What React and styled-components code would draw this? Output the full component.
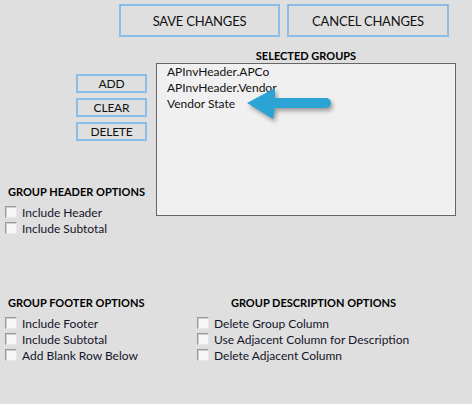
import React from 'react';
import styled, { createGlobalStyle } from 'styled-components';

const GlobalStyle = createGlobalStyle`
  html, body {
    margin: 0;
    padding: 0;
    background: #dfdfdf;
  }
  body {
    font-family: Lato, "Open Sans", "Liberation Sans", sans-serif;
    color: #111;
  }
`;

const Sheet = styled.div`
  width: 472px;
  height: 404px;
  background: #dfdfdf;
  overflow: hidden;
`;

const TopBar = styled.div`
  display: flex;
  gap: 7px;
  padding: 4px 0 0 119px;
`;

const FormButton = styled.button`
  box-sizing: border-box;
  width: ${(p) => p.$w}px;
  height: ${(p) => p.$h}px;
  margin: 0;
  padding: 0;
  background: #dfdfdf;
  border: 2px solid #8bbde9;
  border-radius: 0;
  font-family: inherit;
  font-size: ${(p) => p.$size}px;
  color: #111;
  letter-spacing: -0.2px;
  cursor: pointer;
`;

const Middle = styled.div`
  display: flex;
  margin-top: 11px;
`;

const LeftColumn = styled.div`
  width: 156px;
  display: flex;
  flex-direction: column;
`;

const ButtonStack = styled.div`
  display: flex;
  flex-direction: column;
  gap: 5px;
  margin: 26px 0 0 76px;
`;

const GroupBlock = styled.div`
  width: 300px;
  display: flex;
  flex-direction: column;
`;

const Title = styled.div`
  font-weight: 700;
  font-size: 11px;
  line-height: 15px;
  color: #000;
  text-align: ${(p) => p.$align || 'left'};
  padding-left: ${(p) => p.$indent || 0}px;
  white-space: nowrap;
`;

const ListBox = styled.div`
  position: relative;
  box-sizing: border-box;
  height: 153px;
  background: #f0f0f0;
  border: 1px solid #666;
  padding: 0 0 0 10px;
`;

const ListItem = styled.div`
  font-size: 12px;
  line-height: 16px;
  color: #111;
`;

const Pointer = styled.svg`
  position: absolute;
  left: 88px;
  top: 21px;
  overflow: visible;
  filter: drop-shadow(2px 3px 2px rgba(0, 0, 0, 0.35));
`;

const Section = styled.div`
  box-sizing: border-box;
  display: flex;
  flex-direction: column;
  margin-top: ${(p) => p.$top || 0}px;
  padding-left: ${(p) => p.$pad ?? 5}px;
  width: ${(p) => (p.$w ? `${p.$w}px` : 'auto')};
`;

const OptionList = styled.div`
  display: flex;
  flex-direction: column;
  margin-top: 5px;
`;

const Option = styled.label`
  display: flex;
  align-items: center;
  gap: 5px;
  height: 16px;
  font-size: 12px;
  color: #14142a;
  white-space: nowrap;
`;

const Box = styled.span`
  box-sizing: border-box;
  width: 12px;
  height: 12px;
  flex: none;
  background: #f6f6f6;
  border: 1px solid;
  border-color: #9a9a9a #e6e6e6 #e6e6e6 #9a9a9a;
  box-shadow: inset 1px 1px 0 #cfcfcf;
`;

const FooterRow = styled.div`
  display: flex;
  margin-top: 59px;
`;

const Check = ({ children }) => (
  <Option>
    <Box />
    {children}
  </Option>
);

const groups = ['APInvHeader.APCo', 'APInvHeader.Vendor', 'Vendor State'];

export default function App() {
  return (
    <Sheet>
      <GlobalStyle />
      <TopBar>
        <FormButton $w={161} $h={33} $size={13}>SAVE CHANGES</FormButton>
        <FormButton $w={162} $h={33} $size={13}>CANCEL CHANGES</FormButton>
      </TopBar>

      <Middle>
        <LeftColumn>
          <ButtonStack>
            <FormButton $w={71} $h={19} $size={12}>ADD</FormButton>
            <FormButton $w={71} $h={19} $size={12}>CLEAR</FormButton>
            <FormButton $w={71} $h={19} $size={12}>DELETE</FormButton>
          </ButtonStack>
          <Section $top={43}>
            <Title $indent={3}>GROUP HEADER OPTIONS</Title>
            <OptionList>
              <Check>Include Header</Check>
              <Check>Include Subtotal</Check>
            </OptionList>
          </Section>
        </LeftColumn>

        <GroupBlock>
          <Title $align="center">SELECTED GROUPS</Title>
          <ListBox>
            {groups.map((g) => (
              <ListItem key={g}>{g}</ListItem>
            ))}
            <Pointer width="90" height="42" viewBox="0 0 90 42">
              <path
                d="M2 18 L30 3 L30 13 L81 13 A5 5 0 0 1 81 23 L30 23 L28 34 Z"
                fill="#2ba3d4"
              />
            </Pointer>
          </ListBox>
        </GroupBlock>
      </Middle>

      <FooterRow>
        <Section $w={197}>
          <Title $indent={3}>GROUP FOOTER OPTIONS</Title>
          <OptionList>
            <Check>Include Footer</Check>
            <Check>Include Subtotal</Check>
            <Check>Add Blank Row Below</Check>
          </OptionList>
        </Section>
        <Section $w={233} $pad={0}>
          <Title $align="center">GROUP DESCRIPTION OPTIONS</Title>
          <OptionList>
            <Check>Delete Group Column</Check>
            <Check>Use Adjacent Column for Description</Check>
            <Check>Delete Adjacent Column</Check>
          </OptionList>
        </Section>
      </FooterRow>
    </Sheet>
  );
}
